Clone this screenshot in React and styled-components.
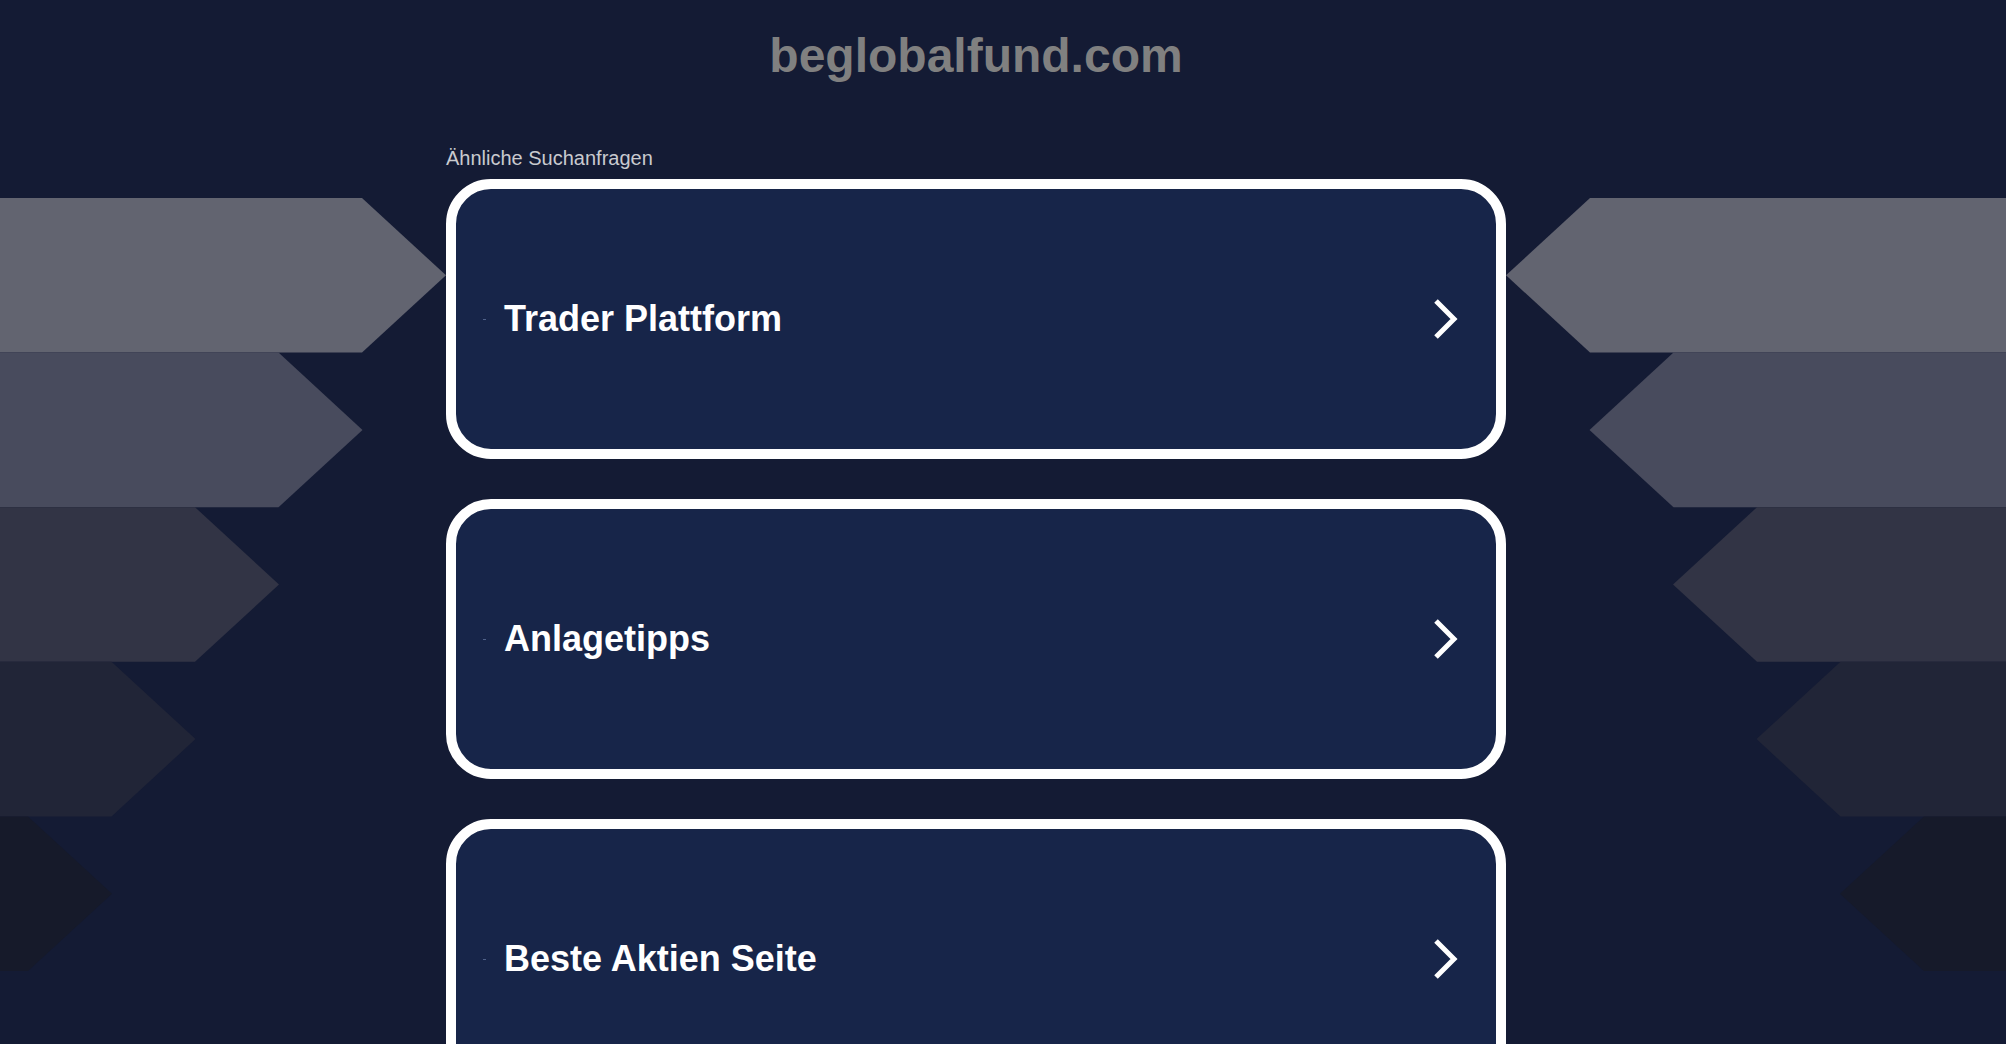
import React from 'react';
import styled, { createGlobalStyle } from 'styled-components';

const GlobalStyle = createGlobalStyle`
  html, body {
    margin: 0;
    padding: 0;
    height: 100%;
    overflow: hidden;
    background: #141b34;
  }
  body {
    font-family: "Liberation Sans", Arial, Helvetica, sans-serif;
  }
`;

const Page = styled.div`
  display: grid;
  grid-template-columns: 446px 1060px 1fr;
  grid-template-rows: auto auto 1fr;
  height: 1044px;
  overflow: hidden;
`;

const Header = styled.h1`
  grid-column: 2;
  grid-row: 1;
  margin: 0;
  padding-top: 32px;
  font-size: 48px;
  line-height: 48px;
  font-weight: 700;
  color: #808080;
  text-align: center;
`;

const Label = styled.div`
  grid-column: 2;
  grid-row: 2;
  margin: 67px 0 9px;
  font-size: 20px;
  line-height: 23px;
  color: #c9cacf;
`;

const Side = styled.div`
  grid-column: ${(p) => (p.$side === 'left' ? 1 : 3)};
  grid-row: 3;
  padding-top: 19px;
  overflow: hidden;
  display: flex;
  justify-content: ${(p) => (p.$side === 'left' ? 'flex-end' : 'flex-start')};
  align-items: flex-start;

  svg {
    display: block;
    flex: none;
  }
`;

const CardList = styled.div`
  grid-column: 2;
  grid-row: 3;
  display: flex;
  flex-direction: column;
  gap: 40px;
`;

const Card = styled.a`
  display: flex;
  align-items: center;
  box-sizing: border-box;
  height: 280px;
  flex: none;
  border: 10px solid #ffffff;
  border-radius: 45px;
  background: #172549;
  padding: 0 37px 0 27px;
  color: #ffffff;
  text-decoration: none;
  cursor: pointer;
`;

const Bullet = styled.span`
  flex: none;
  width: 3px;
  height: 1px;
  margin-right: 18px;
  background: #4f6189;
`;

const Title = styled.span`
  flex: 1;
  font-size: 36px;
  font-weight: 700;
  letter-spacing: 0;
`;

const BANDS = ['#626470', '#484b5d', '#323445', '#212537', '#161a2a'];
const H = 154.6;
const STEP = 83.5;
const HEAD = 84;

const LeftArrows = () => {
  const w = 446;
  return (
    <svg width={w} height={H * 5} viewBox={`0 0 ${w} ${H * 5}`}>
      {BANDS.map((c, i) => {
        const y0 = i * H;
        const y1 = y0 + H;
        const ym = y0 + H / 2;
        const tip = w - i * STEP;
        return (
          <polygon
            key={c}
            fill={c}
            points={`-10,${y0} ${tip - HEAD},${y0} ${tip},${ym} ${tip - HEAD},${y1} -10,${y1}`}
          />
        );
      })}
    </svg>
  );
};

const RightArrows = () => {
  const w = 520;
  return (
    <svg width={w} height={H * 5} viewBox={`0 0 ${w} ${H * 5}`}>
      {BANDS.map((c, i) => {
        const y0 = i * H;
        const y1 = y0 + H;
        const ym = y0 + H / 2;
        const tip = i * STEP;
        return (
          <polygon
            key={c}
            fill={c}
            points={`${tip},${ym} ${tip + HEAD},${y0} ${w + 10},${y0} ${w + 10},${y1} ${tip + HEAD},${y1}`}
          />
        );
      })}
    </svg>
  );
};

const Chevron = () => (
  <svg width="26" height="42" viewBox="0 0 26 42" aria-hidden="true">
    <polyline
      points="3,3 21,21 3,39"
      fill="none"
      stroke="#ffffff"
      strokeWidth="5"
      strokeLinejoin="miter"
    />
  </svg>
);

const items = ['Trader Plattform', 'Anlagetipps', 'Beste Aktien Seite'];

export default function App() {
  return (
    <>
      <GlobalStyle />
      <Page>
        <Header>beglobalfund.com</Header>
        <Label>Ähnliche Suchanfragen</Label>
        <Side $side="left">
          <LeftArrows />
        </Side>
        <CardList>
          {items.map((t) => (
            <Card key={t}>
              <Bullet />
              <Title>{t}</Title>
              <Chevron />
            </Card>
          ))}
        </CardList>
        <Side $side="right">
          <RightArrows />
        </Side>
      </Page>
    </>
  );
}
